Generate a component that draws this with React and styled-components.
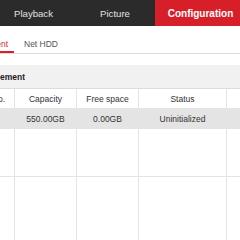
import React from "react";
import styled, { createGlobalStyle } from "styled-components";

const Global = createGlobalStyle`
  html, body { margin: 0; padding: 0; background: #fff; }
  body { width: 240px; height: 240px; overflow: hidden; font-family: "Liberation Sans", Arial, sans-serif; }
`;

const Page = styled.div`
  width: 240px;
  height: 240px;
  overflow: hidden;
  position: relative;
  display: flex;
  flex-direction: column;
`;

const Nav = styled.div`
  height: 26px;
  background: #2b2b2b;
  display: flex;
  margin-left: -8px;
  flex-shrink: 0;
`;

const NavTab = styled.div`
  width: ${(p) => p.$w}px;
  flex-shrink: 0;
  display: flex;
  align-items: center;
  justify-content: center;
  padding-left: ${(p) => p.$pl || 0}px;
  box-sizing: border-box;
  font-size: ${(p) => (p.$active ? 10 : 9.6)}px;
  font-weight: ${(p) => (p.$active ? 700 : 400)};
  color: ${(p) => (p.$active ? "#fff" : "#e2e2e2")};
  background: ${(p) => (p.$active ? "#d71f2a" : "transparent")};
`;

const SubTabs = styled.div`
  height: 27px;
  border-bottom: 1px solid #dcdcdc;
  display: flex;
  align-items: flex-end;
  gap: 10px;
  flex-shrink: 0;
`;

const SubTab = styled.div`
  height: 14px;
  line-height: 14px;
  font-size: 8.5px;
  color: ${(p) => (p.$active ? "#d71f2a" : "#555")};
  border-bottom: 2px solid ${(p) => (p.$active ? "#d71f2a" : "transparent")};
  display: flex;
  justify-content: ${(p) => (p.$clip ? "flex-end" : "flex-start")};
  overflow: hidden;
  white-space: nowrap;
  width: ${(p) => (p.$clip ? `${p.$clip}px` : "auto")};
  padding-right: ${(p) => (p.$clip ? 6 : 0)}px;
  flex-shrink: 0;
`;

const SectionBand = styled.div`
  display: flex;
  margin-top: 11px;
  height: 23px;
  background: #f1f1f1;
  border-bottom: 1px solid #dcdcdc;
  flex-shrink: 0;
`;

const SectionTitle = styled.div`
  display: flex;
  align-items: center;
  justify-content: flex-end;
  overflow: hidden;
  white-space: nowrap;
  width: 25px;
  font-size: 8.5px;
  font-weight: 700;
  color: #222;
  flex-shrink: 0;
`;

const Table = styled.div`
  display: grid;
  grid-template-columns: 15px 62px 62px 88px 30px;
  grid-template-rows: 20px 20px 48px 1fr;
  flex: 1;
`;

const Cell = styled.div`
  border-right: 1px solid #e4e4e4;
  border-bottom: ${(p) => (p.$last ? "none" : "1px solid #e4e4e4")};
  background: ${(p) => (p.$shade ? "#e4e4e4" : "#fff")};
  display: flex;
  align-items: center;
  justify-content: ${(p) => (p.$clip ? "flex-end" : "center")};
  overflow: hidden;
  white-space: nowrap;
  font-size: 8.5px;
  color: #333;
  padding-right: ${(p) => (p.$clip ? 9 : 0)}px;
  box-sizing: border-box;
`;

const cols = ["No.", "Capacity", "Free space", "Status", "Property"];
const data = ["1", "550.00GB", "0.00GB", "Uninitialized", ""];

export default function App() {
  return (
    <Page>
      <Global />
      <Nav>
        <NavTab $w={83}>Playback</NavTab>
        <NavTab $w={80}>Picture</NavTab>
        <NavTab $w={88} $active $pl={3}>Configuration</NavTab>
      </Nav>
      <SubTabs>
        <SubTab $active $clip={8}><span>HDD Management</span></SubTab>
        <SubTab>Net HDD</SubTab>
      </SubTabs>
      <SectionBand>
        <SectionTitle><span>HDD Management</span></SectionTitle>
      </SectionBand>
      <Table>
        {cols.map((c, i) => (
          <Cell key={c} $clip={i === 0}>
            {i === 4 ? "" : <span>{c}</span>}
          </Cell>
        ))}
        {data.map((d, i) => (
          <Cell key={"d" + i} $shade>
            {i === 0 ? "" : d}
          </Cell>
        ))}
        {cols.map((c, i) => (
          <Cell key={"e" + i} />
        ))}
        {cols.map((c, i) => (
          <Cell key={"f" + i} $last />
        ))}
      </Table>
    </Page>
  );
}
